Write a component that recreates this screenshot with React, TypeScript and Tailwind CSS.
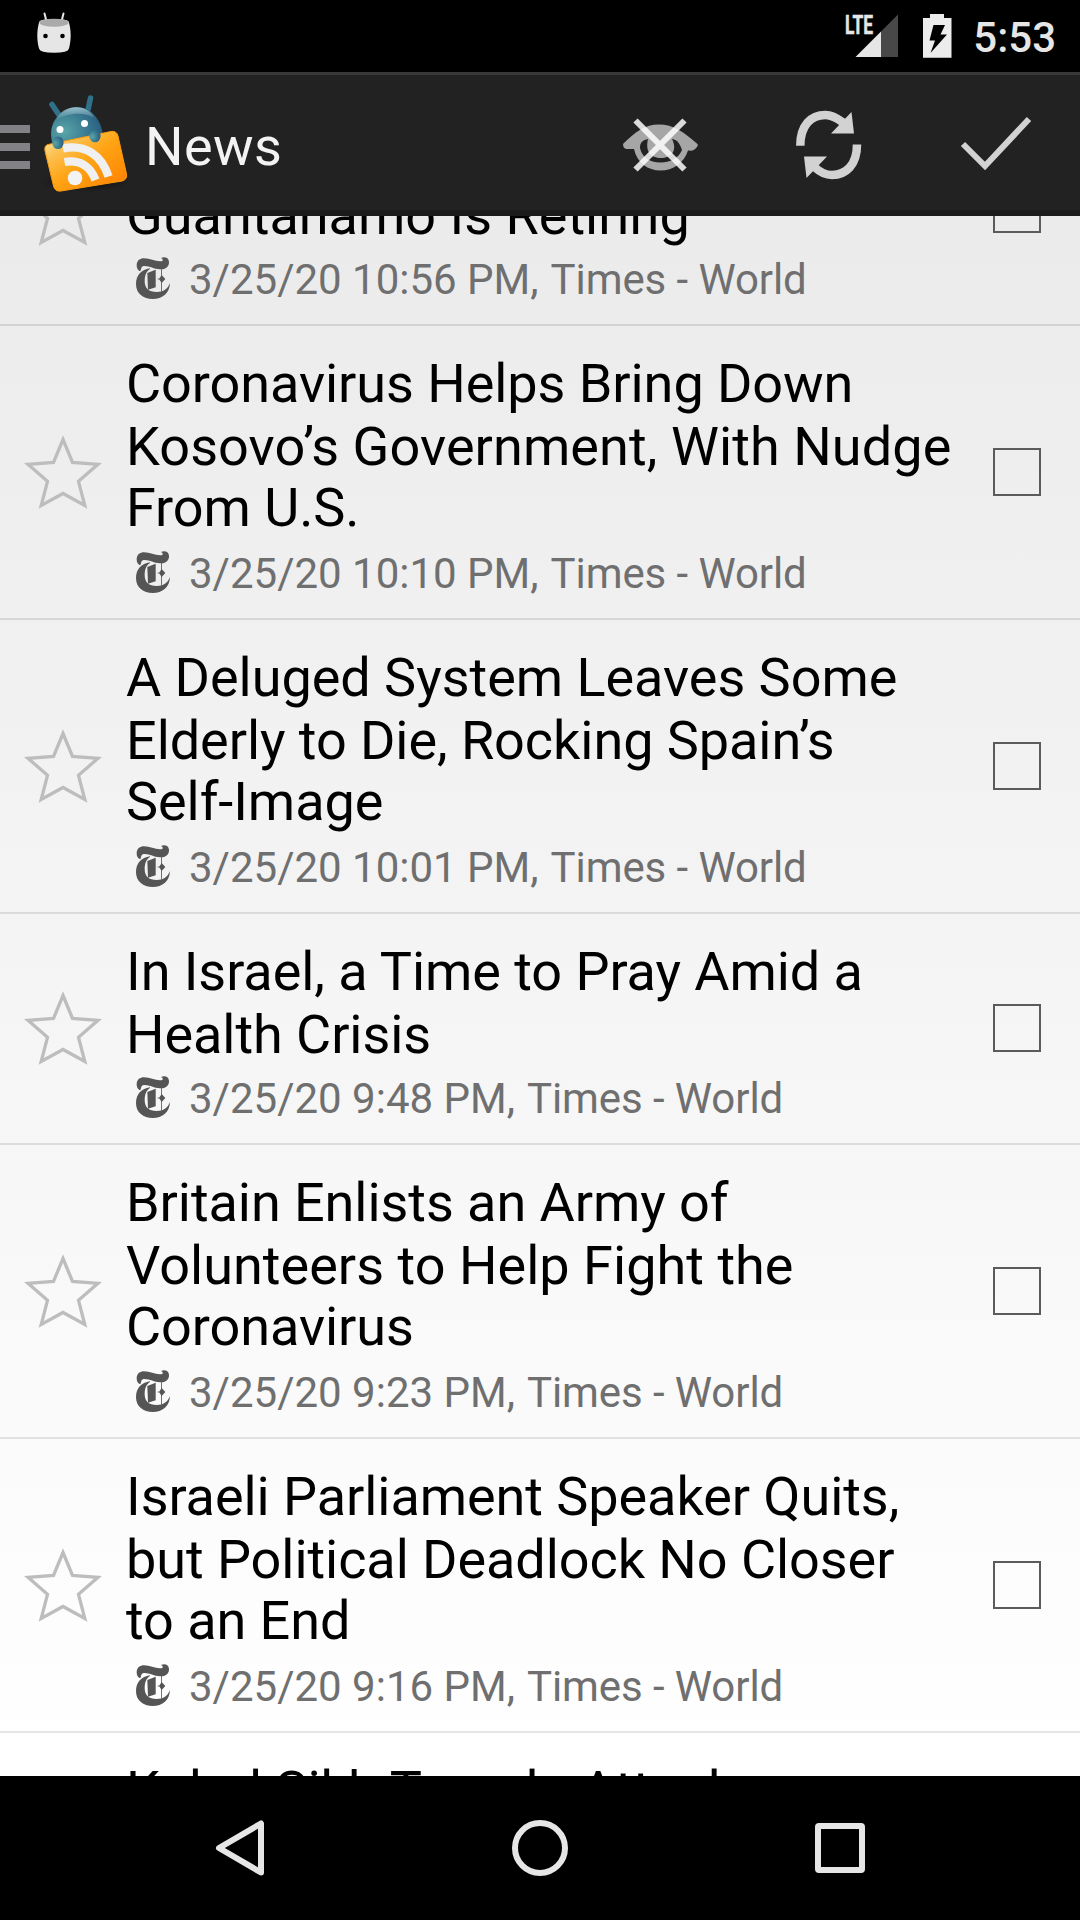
import React from "react";

type Line = { text: string; tracking?: string };
type Item = { lines: Line[]; time: string; height: string };

const TWO_LINES = "h-[231px] pb-px";
const THREE_LINES = "h-[294px]";

const ITEMS: Item[] = [
  {
    lines: [{ text: "\u00a0" }, { text: "Guantánamo Is Retiring", tracking: "tracking-normal" }],
    time: "10:56 PM",
    height: TWO_LINES,
  },
  {
    lines: [
      { text: "Coronavirus Helps Bring Down" },
      { text: "Kosovo’s Government, With Nudge", tracking: "tracking-[0.09px]" },
      { text: "From U.S." },
    ],
    time: "10:10 PM",
    height: THREE_LINES,
  },
  {
    lines: [
      { text: "A Deluged System Leaves Some", tracking: "tracking-[-0.03px]" },
      { text: "Elderly to Die, Rocking Spain’s" },
      { text: "Self-Image" },
    ],
    time: "10:01 PM",
    height: THREE_LINES,
  },
  {
    lines: [{ text: "In Israel, a Time to Pray Amid a" }, { text: "Health Crisis" }],
    time: "9:48 PM",
    height: TWO_LINES,
  },
  {
    lines: [
      { text: "Britain Enlists an Army of" },
      { text: "Volunteers to Help Fight the", tracking: "tracking-[0.03px]" },
      { text: "Coronavirus" },
    ],
    time: "9:23 PM",
    height: THREE_LINES,
  },
  {
    lines: [
      { text: "Israeli Parliament Speaker Quits," },
      { text: "but Political Deadlock No Closer" },
      { text: "to an End" },
    ],
    time: "9:16 PM",
    height: THREE_LINES,
  },
  {
    lines: [{ text: "Kabul Sikh Temple Attack" }, { text: "\u00a0" }],
    time: "9:02 PM",
    height: TWO_LINES,
  },
];

function StatusBar() {
  return (
    <div className="flex h-[72px] shrink-0 items-start bg-black">
      <svg className="ml-[36px] mt-[12px] h-[42px] w-[36px]" viewBox="0 0 36 42">
        <path d="M8.5 1.5l2 8M27.500 1.500l-2 8" stroke="#e6e6e6" strokeWidth="2" strokeLinecap="round" />
        <path d="M3 10.500Q3 7 18 7T33 10.500C35 18 35.500 27 33 36.500Q32 40.800 18 40.800T3 36.500C.5 27 1 18 3 10.500Z" fill="#e6e6e6" />
        <ellipse cx="18" cy="10.700" rx="14.500" ry="4" fill="#aaa" />
        <circle cx="9.500" cy="24" r="2.300" fill="#000" />
        <circle cx="26.500" cy="24" r="2.300" fill="#000" />
      </svg>
      <div className="ml-auto mr-[24px] flex items-start">
        <svg className="mt-[14px] h-[44px] w-[54px] overflow-visible" viewBox="0 0 54 44">
          <path d="M11.500 43L37 17.500V43Z" fill="#e6e6e6" />
          <path d="M37 17.500L54 .5V43H37Z" fill="#484848" />
          <text x="1" y="19.800" textLength="28" lengthAdjust="spacingAndGlyphs" className="text-[26px] font-bold" fill="#e6e6e6" stroke="#e6e6e6" strokeWidth=".5">
            LTE
          </text>
        </svg>
        <svg className="ml-[24px] mt-[14px] h-[44px] w-[30px]" viewBox="0 0 30 44">
          <path d="M8 0H22V4H29.500V43.700H1V4H8Z" fill="#ececec" />
          <path d="M11.500 11H23L18.500 20.500H25L8.500 39L13 26.500H7.500Z" fill="#000" />
        </svg>
        <div className="ml-[21px] mt-[10px] text-[42px] leading-[56px] font-medium text-[#e6e6e6]">5:53</div>
      </div>
    </div>
  );
}

function AppLogo() {
  return (
    <svg className="mb-[9px] ml-[9px] h-[108px] w-[96px]" viewBox="0 0 96 108" overflow="visible">
      <defs>
        <linearGradient id="folder" x1="0" y1="0" x2="1" y2="1">
          <stop offset="0" stopColor="#fff0b0" />
          <stop offset=".25" stopColor="#fcc050" />
          <stop offset=".5" stopColor="#ffa414" />
          <stop offset="1" stopColor="#ff7d00" />
        </linearGradient>
        <radialGradient id="head" cx=".25" cy=".55" r=".8">
          <stop offset="0" stopColor="#5aa5a8" />
          <stop offset=".6" stopColor="#36768f" />
          <stop offset="1" stopColor="#28597c" />
        </radialGradient>
        <linearGradient id="shine" x1="0" y1="0" x2="0" y2="1">
          <stop offset="0" stopColor="#b9d8de" stopOpacity=".75" />
          <stop offset="1" stopColor="#b9d8de" stopOpacity="0" />
        </linearGradient>
        <radialGradient id="shade">
          <stop offset="0" stopColor="#000" stopOpacity=".6" />
          <stop offset="1" stopColor="#000" stopOpacity="0" />
        </radialGradient>
      </defs>
      <ellipse cx="46" cy="98" rx="46" ry="10" fill="url(#shade)" />
      <path d="M13 20.500L20 31M51.500 14L49 26" stroke="#2f7189" strokeWidth="5.500" strokeLinecap="round" />
      <path d="M13 58C9 41 18 28 33 23.500C48 20 62 32 64 52L63 66L17 68Z" fill="url(#head)" />
      <path d="M17 36C21 26 31 22.500 40 23.500C49 24.500 54 30 55 34C44 27 28 29 17 36Z" fill="url(#shine)" />
      <circle cx="21" cy="45.500" r="3.500" fill="#fff" />
      <circle cx="45.500" cy="39.500" r="3.500" fill="#fff" />
      <path d="M9 60.500L72 47.500Q77.500 46.500 79 52L87.500 90Q88.500 95.500 83 97L22 107Q16 108 14.500 102L6 67Q5 61.500 9 60.500Z" fill="url(#folder)" stroke="#f99a10" strokeWidth="1" />
      <circle cx="36" cy="94" r="7.300" fill="#f3f3f3" />
      <path d="M25.500 78C40 75.500 51 81.500 56.500 96M24 64.300C47 60 63 71.500 69.500 92.500" stroke="#f0f0f0" strokeWidth="8.300" fill="none" />
      <ellipse cx="19" cy="58.700" rx="5.600" ry="6.300" fill="url(#head)" />
      <ellipse cx="56" cy="52" rx="5.600" ry="6.300" fill="url(#head)" />
    </svg>
  );
}

function ActionBar() {
  return (
    <div className="flex h-[144px] shrink-0 items-center border-t-[3px] border-b-[6px] border-t-[#383838] border-b-[#1b1b1b] bg-[#222222]">
      <div className="mt-[8px] flex w-[30px] flex-col gap-[10px]">
        <div className="h-[8px] bg-[#828286]" />
        <div className="h-[8px] bg-[#828286]" />
        <div className="h-[8px] bg-[#828286]" />
      </div>
      <AppLogo />
      <div className="mt-[8px] ml-[10px] text-[54px] leading-[64px] tracking-[0.4px] text-[#f3f3f3]">News</div>
      <svg className="ml-auto mt-[2px] h-[60px] w-[78px]" viewBox="0 0 78 60">
        <path fillRule="evenodd" d="M2 30C14 18 24 10.500 38 10.500S63 18 76.500 30Q77.500 31 76 33C73 36.500 72 37 67 36.500C63 49 52 56.500 39.500 56.500S16 49 13 35H5Q2 34 2 30ZM19 34C21 43 28 48.500 39.500 48.500S58 43 61 36C59 30 57 26 51 25C57 37 50 44 40 44S24 38 27 25C22 26 19 28 19 34Z" fill="#a6a6a6" />
        <path d="M14.500 6.500L63.500 55.500M63.500 6.500L14.500 55.500" stroke="#fff" strokeOpacity=".84" strokeWidth="6" />
      </svg>
      <svg className="mt-[4px] ml-[95px] h-[74px] w-[70px]" viewBox="0 0 70 74">
        <path d="M6.300 37.700C6.300 17 17 7 31.500 7Q39 7 49 14.500M63 36.500C63 57 52 67 38 67Q29 67 21 59.500" fill="none" stroke="#d2d2d2" strokeWidth="8.500" />
        <path d="M57.500 4L60 25.500H37Z M12.500 70L10 48.500H33Z" fill="#d2d2d2" />
      </svg>
      <svg className="mt-px mr-[48px] ml-[96px] h-[56px] w-[72px]" viewBox="0 0 72 56">
        <path d="M3 29L25 51L69 4" fill="none" stroke="#d2d2d2" strokeWidth="6" />
      </svg>
    </div>
  );
}

function FeedLogo() {
  return (
    <svg className="mr-[19px] mb-[4px] ml-[10px] h-[42px] w-[34px]" viewBox="0 0 102 126" fill="#555555">
      <path d="M10 42C4 38 2 32 2 24C3 10 12 4 24 4C42 4 56 13 72 13C81 13 84 8 75 3C84 -2 98 0 99 14C100 30 88 38 72 37C54 36 42 27 26 27C15 27 16 34 14 41Z" />
      <path d="M42 34C16 38 0 54 0 82C0 110 22 126 50 126C80 126 101 108 102 78C95 96 82 105 62 105C38 105 26 94 26 72C26 54 32 42 42 36Z" />
      <path d="M34 48L59 38V91L36 98Z" />
      <path d="M75.500 36H78V104H75.500Z" />
      <path d="M62 66L70 64.500L77 54L88 66L77 78L70 67.500Z" />
    </svg>
  );
}

function Row({ item }: { item: Item }) {
  return (
    <div className={`flex shrink-0 items-center border-b-2 border-black/10 ${item.height}`}>
      <svg className="ml-[24px] h-[76px] w-[78px] shrink-0" viewBox="0 0 78 76">
        <path d="M39 5.500L48.500 28.500L74 30.300L54.500 47.300L60.800 71.500L39 59.500L17.200 71.500L23.500 47.300L4 30.300L29.500 28.500Z" fill="none" stroke="#bdbdbd" strokeWidth="3.300" />
      </svg>
      <div className="ml-[24px] flex flex-col self-start pt-[26px]">
        {item.lines.map((line, i) => (
          <div
            key={i}
            className={`h-[63px] text-[54px] leading-[63px] whitespace-nowrap text-black nth-[3]:-mt-[2px] nth-[2]:nth-last-[2]:h-[68px] nth-[3]:nth-last-[2]:h-[70px] ${line.tracking ?? "tracking-[-0.06px]"}`}
          >
            {line.text}
          </div>
        ))}
        <div className="flex h-[56px] items-center text-[42px] leading-[56px] whitespace-nowrap text-[#6f6f6f]">
          <FeedLogo />
          <span>3/25/20 {item.time},</span>
          <span className="ml-[12px] tracking-[-0.08px]">Times - World</span>
        </div>
      </div>
      <div className="mr-[39px] ml-auto h-[48px] w-[48px] shrink-0 border-2 border-[#5b5b5b]" />
    </div>
  );
}

function NavBar() {
  return (
    <div className="flex h-[144px] shrink-0 items-center bg-black pl-[212px]">
      <svg className="h-[60px] w-[56px]" viewBox="0 0 56 60">
        <path d="M49 5.500V54.500L7 30Z" fill="none" stroke="#e6e6e6" strokeWidth="6" strokeLinejoin="round" />
      </svg>
      <div className="ml-[244px] h-[56px] w-[56px] rounded-full border-[6px] border-[#e6e6e6]" />
      <div className="ml-[247px] h-[50px] w-[50px] rounded-[4px] border-[6px] border-[#e6e6e6]" />
    </div>
  );
}

export default function App() {
  return (
    <div className="flex h-[1920px] w-[1080px] flex-col overflow-hidden font-[Roboto,sans-serif]">
      <StatusBar />
      <ActionBar />
      <div className="h-[1560px] shrink-0 overflow-hidden bg-linear-to-b from-[#ebebeb] to-white">
        <div className="-mt-[121px] flex flex-col">
          {ITEMS.map((item) => (
            <Row key={item.time} item={item} />
          ))}
        </div>
      </div>
      <NavBar />
    </div>
  );
}
